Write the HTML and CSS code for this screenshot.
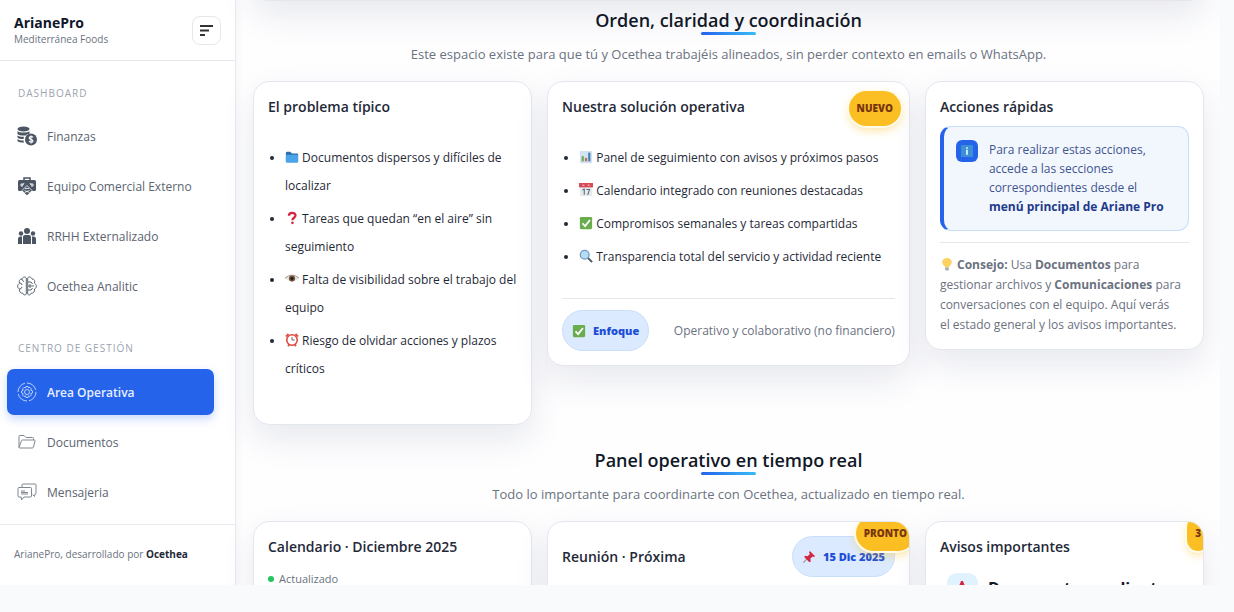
FILE: index.html
```html
<!DOCTYPE html>
<html lang="es">
<head>
    <meta charset="UTF-8">
    <meta name="viewport" content="width=device-width, initial-scale=1.0">
    <title>ArianePro - Area Operativa</title>
    <link rel="stylesheet" href="styles.css">
</head>
<body>
    <!-- Iconos compartidos -->
    <svg class="sprite" aria-hidden="true">
        <symbol id="i-check" viewBox="0 0 16 16">
            <rect x="1" y="1" width="14" height="14" rx="1.5" fill="#6aad4f"/>
            <path d="M4 8.5l3 3 5.5-7" fill="none" stroke="#fff" stroke-width="2"/>
        </symbol>
        <symbol id="i-pin" viewBox="0 0 16 16">
            <path d="M5.5 10.500L1.500 14.500" stroke="#8a97a3" stroke-width="1.200"/>
            <path d="M9 1l6 6-1.500 1-1.500-.5-2.500 2.500.5 3-1.500 1L2.500 8l1-1.500 3 .5L9 4.500 8 2.500z" fill="#d3263f"/>
        </symbol>
    </svg>

    <div class="app">
        <aside class="sidebar">
            <header class="sidebar-header">
                <div>
                    <div class="brand">ArianePro</div>
                    <div class="company">Mediterránea Foods</div>
                </div>
                <button class="menu-btn" type="button" aria-label="Menú">
                    <svg width="15" height="13" viewBox="0 0 15 13" fill="none" stroke="#333" stroke-width="2"><path d="M1 2h13M1 6.500h9M1 11h5"/></svg>
                </button>
            </header>

            <nav class="menu">
                <h4 class="menu-title">DASHBOARD</h4>
                <a class="menu-item" href="#">
                    <svg class="menu-icon" viewBox="0 0 20 20" fill="#4b5563">
                        <ellipse cx="6.500" cy="3" rx="6" ry="2.500"/>
                        <path d="M.5 5c1 2 11 2 12 0v2.500c-1 .5-3 1-4 2-3 .3-7-.2-8-1.500zM.5 9.500c1 1 4 1.500 6.500 1.300L6.500 13C4 13 1 12.500.5 11.500zM.5 13c1 1 3.500 1.500 6 1.500l.5 2c-3 0-6-.5-6.500-1.500z"/>
                        <circle cx="14" cy="13.500" r="6"/>
                        <path d="M16 11.500c-.5-1.500-3.800-1.200-3.800.4 0 1.700 3.800 1.200 3.800 3 0 1.700-3.500 1.700-4 0M14 9.500v8" fill="none" stroke="#fff" stroke-width="1.200"/>
                    </svg>
                    Finanzas
                </a>
                <a class="menu-item" href="#">
                    <svg class="menu-icon" viewBox="0 0 20 20" fill="#4b5563">
                        <path d="M7 4V2h6v2" fill="none" stroke="#4b5563" stroke-width="1.500"/>
                        <rect x="1" y="4" width="18" height="11" rx="1.500"/>
                        <path d="M3 9h3l1-2M17 9h-3l-1-2M5 7v4M15 7v4" fill="none" stroke="#fff" stroke-width=".9"/>
                        <path d="M5 14.500l5-5 5 5-3 3.500-2 1.500L8 18z" stroke="#fff" stroke-width=".8"/>
                        <path d="M7.500 14.500l5 2M12.500 14.500l-5 2M8 12.500h4" stroke="#fff" stroke-width=".8"/>
                    </svg>
                    Equipo Comercial Externo
                </a>
                <a class="menu-item" href="#">
                    <svg class="menu-icon" viewBox="0 0 20 20" fill="#4b5563">
                        <circle cx="10" cy="5" r="3"/><circle cx="4" cy="7.500" r="2.200"/><circle cx="16" cy="7.500" r="2.200"/>
                        <path d="M6 18v-7q0-2 2-2h4q2 0 2 2v7zM1 18v-5q0-2.500 2.500-2.500H5V18zM15 18v-7.500h1.500Q19 10.500 19 13v5z"/>
                    </svg>
                    RRHH Externalizado
                </a>
                <a class="menu-item" href="#">
                    <svg class="menu-icon" viewBox="0 0 20 20" fill="none" stroke="#5b6470" stroke-width="1">
                        <path d="M9.300 2C8 .3 5.500 1 5 3 2.500 3 1.500 5.500 2.700 7 0 8.500 0 12 2.500 13 2 16 4 17.500 5.500 17c1 2.500 3.500 2.200 3.800 1zM10.700 2C12 .3 14.500 1 15 3c2.500 0 3.500 2.500 2.300 4 2.700 1.500 2.700 5 .2 6 .5 3-1.500 4.500-3 4-1 2.500-3.500 2.200-3.800 1z"/>
                        <path d="M5 3q0 2 2 2.500M2.700 7Q5 7 5 9M2.500 13q2 0 2.500-2M11 6h3l1.500 2M11 10h6M11 14h3l1.500-2M13 8v4"/>
                    </svg>
                    Ocethea Analitic
                </a>

                <h4 class="menu-title">CENTRO DE GESTIÓN</h4>
                <a class="menu-item active" href="#">
                    <svg class="menu-icon" viewBox="0 0 20 20" fill="none" stroke="#c7dafc" stroke-width=".9">
                        <circle cx="10" cy="10" r="9" stroke-dasharray="12 2"/>
                        <circle cx="10" cy="10" r="2.500"/>
                        <path d="M9 4.500h2l.4 1.500 1.500-.7 1.500 1.500-.7 1.400 1.800.7v2l-1.800.6.7 1.500-1.500 1.500-1.400-.7-.5 1.700H9l-.5-1.700-1.500.7L5.500 13l.7-1.500-1.700-.6V9l1.700-.7-.7-1.500L7 5.300l1.500.7z"/>
                    </svg>
                    Area Operativa
                </a>
                <a class="menu-item" href="#">
                    <svg class="menu-icon" viewBox="0 0 20 20" fill="none" stroke="#808791" stroke-width="1">
                        <path d="M2 15.500V4.500q0-1 1-1h4l2 2h6.500q1 0 1 1V8M2 15.500L4.500 8.500Q4.800 8 5.500 8h11.700q1 0 .8 1l-1.500 6q-.3 1-1.200 1H2.800Q2 16 2 15.500z"/>
                    </svg>
                    Documentos
                </a>
                <a class="menu-item" href="#">
                    <svg class="menu-icon" viewBox="0 0 20 20" fill="none" stroke="#808791" stroke-width="1">
                        <path d="M5 5V3q0-1 1-1h12q1 0 1 1v8q0 1-1 1l-.5 2.500-2-2"/>
                        <path d="M2 5.500h11.500q1 0 1 1V14q0 1-1 1H7l-2.500 3-.3-3H2q-1 0-1-1V6.500q0-1 1-1z"/>
                        <path d="M4 9h4M4 10.500h7M4 12h7" />
                    </svg>
                    Mensajeria
                </a>
            </nav>

            <footer class="sidebar-footer">ArianePro, desarrollado por <strong>Ocethea</strong></footer>
        </aside>

        <main class="content">
            <div class="hero-end"></div>

            <section>
                <div class="section-head">
                    <h2>Orden, claridad y coordinación</h2>
                    <p>Este espacio existe para que tú y Ocethea trabajéis alineados, sin perder contexto en emails o WhatsApp.</p>
                </div>
                <div class="cards">
                    <article class="card">
                        <div class="card-head"><h3>El problema típico</h3></div>
                        <ul class="list">
                            <li>
                                <svg class="emoji" viewBox="0 0 16 16"><path d="M1 3.500q0-1.500 1.500-1.500H6l2 2h6q1 0 1 1v8H1z" fill="#2a6fa8"/><rect x="1" y="5.500" width="14" height="9" rx="1.200" fill="#4ba3ea"/></svg>
                                Documentos dispersos y difíciles de localizar
                            </li>
                            <li>
                                <svg class="emoji" viewBox="0 0 16 16"><path d="M4.500 5.500C4.500 1 12 1 12 5.200c0 2.500-3.500 2.500-3.500 5.300" fill="none" stroke="#d3263f" stroke-width="2.600"/><circle cx="8.500" cy="13.500" r="1.500" fill="#d3263f"/></svg>
                                Tareas que quedan “en el aire” sin seguimiento
                            </li>
                            <li>
                                <svg class="emoji" viewBox="0 0 16 16"><path d="M0 7.500q8-7 16 0-8 6-16 0z" fill="#e8e2dd"/><path d="M0 7q8-7 16 0" fill="none" stroke="#9a8a80"/><circle cx="8" cy="7.500" r="3.500" fill="#70503c"/><circle cx="8" cy="7.500" r="1.600" fill="#1e1815"/></svg>
                                Falta de visibilidad sobre el trabajo del equipo
                            </li>
                            <li>
                                <svg class="emoji" viewBox="0 0 16 16"><path d="M1 4l3-3M15 4l-3-3M3.500 15l1.500-2M12.500 15L11 13" stroke="#e2483d" stroke-width="2"/><circle cx="8" cy="8" r="6" fill="#fff" stroke="#e2483d" stroke-width="1.800"/><path d="M8 4.500V8h3" fill="none" stroke="#555"/></svg>
                                Riesgo de olvidar acciones y plazos críticos
                            </li>
                        </ul>
                    </article>

                    <article class="card">
                        <span class="badge">NUEVO</span>
                        <div class="card-head"><h3>Nuestra solución operativa</h3></div>
                        <ul class="list">
                            <li>
                                <svg class="emoji" viewBox="0 0 16 16"><rect x="1" y="1" width="14" height="14" rx="1" fill="#d3e3f1"/><path d="M3 7h2.500v6H3z" fill="#6aad4f"/><path d="M6.800 9h2.500v4H6.800z" fill="#c26a5c"/><path d="M10.500 3H13v10h-2.500z" fill="#4a7fb5"/></svg>
                                Panel de seguimiento con avisos y próximos pasos
                            </li>
                            <li>
                                <svg class="emoji" viewBox="0 0 16 16"><rect x="1" y="1" width="14" height="14" fill="#e6eaee"/><path d="M0 0h16v5H0z" fill="#d94a56"/><path d="M4 2.500h2M10 2.500h2" stroke="#fff"/><path d="M4 8l2-1v6.500M8.500 7.500H12l-2 6" fill="none" stroke="#596673" stroke-width="1.200"/></svg>
                                Calendario integrado con reuniones destacadas
                            </li>
                            <li>
                                <svg class="emoji"><use href="#i-check"/></svg>
                                Compromisos semanales y tareas compartidas
                            </li>
                            <li>
                                <svg class="emoji" viewBox="0 0 16 16"><path d="M10 10l5 5" stroke="#4c5963" stroke-width="2.200"/><circle cx="6.500" cy="6.500" r="5" fill="#b8dcf5" stroke="#6d9bc4" stroke-width="1.500"/></svg>
                                Transparencia total del servicio y actividad reciente
                            </li>
                        </ul>
                        <hr>
                        <div class="card-foot">
                            <span class="pill"><svg class="emoji"><use href="#i-check"/></svg>Enfoque</span>
                            <span class="muted">Operativo y colaborativo (no financiero)</span>
                        </div>
                    </article>

                    <article class="card">
                        <div class="card-head"><h3>Acciones rápidas</h3></div>
                        <div class="info">
                            <span class="info-icon">
                                <svg width="12" height="12" viewBox="0 0 14 14"><rect width="14" height="14" rx="1" fill="#3b8fd6"/><path d="M7 2.500v2M7 5.500v6" stroke="#fff" stroke-width="1.800"/></svg>
                            </span>
                            <p>Para realizar estas acciones, accede a las secciones correspondientes desde el <strong>menú principal de Ariane Pro</strong></p>
                        </div>
                        <hr>
                        <p class="tip">
                            <svg class="emoji" viewBox="0 0 16 16"><path d="M5.500 10.500C0 6.500 3 1 8 1s8 5.500 2.500 9.500V12h-5z" fill="#fbd160"/><path d="M5.800 12h4.400v2.500l-1 1H6.800l-1-1z" fill="#a5b2b5"/></svg>
                            <strong>Consejo:</strong> Usa <strong>Documentos</strong> para gestionar archivos y <strong>Comunicaciones</strong> para conversaciones con el equipo. Aquí verás<br>el estado general y los avisos importantes.
                        </p>
                    </article>
                </div>
            </section>

            <section>
                <div class="section-head">
                    <h2>Panel operativo en tiempo real</h2>
                    <p>Todo lo importante para coordinarte con Ocethea, actualizado en tiempo real.</p>
                </div>
                <div class="cards">
                    <article class="card clipped">
                        <div class="card-head"><h3>Calendario · Diciembre 2025</h3></div>
                        <div class="status"><span class="dot"></span>Actualizado</div>
                    </article>
                    <article class="card clipped">
                        <span class="badge corner">PRONTO</span>
                        <div class="card-head">
                            <h3>Reunión · Próxima</h3>
                            <span class="pill"><svg class="emoji"><use href="#i-pin"/></svg>15 Dic 2025</span>
                        </div>
                    </article>
                    <article class="card clipped">
                        <span class="badge corner">3</span>
                        <div class="card-head"><h3>Avisos importantes</h3></div>
                        <div class="notice">
                            <span class="notice-icon"><svg class="emoji" viewBox="0 0 16 16"><path d="M7 0h2l6 14H1z" fill="#d3263f"/></svg></span>
                            <strong>Documento pendiente</strong>
                        </div>
                    </article>
                </div>
            </section>
        </main>
    </div>
</body>
</html>
```

FILE: styles.css
```css
* {
    box-sizing: border-box;
}

body {
    margin: 0;
    padding: 0 14px 27px 0;
    height: 100vh;
    overflow: hidden;
    background-color: #f8fafc;
    font-family: "Segoe UI", "Open Sans", sans-serif;
    font-size: 12px;
    color: #1f2937;
}

h2, h3, h4, p, ul {
    margin: 0;
}

.sprite {
    display: none;
}

.app {
    display: flex;
    height: 100%;
    overflow: hidden;
    background-color: #fefeff;
}

/* Barra lateral */
.sidebar {
    display: flex;
    flex-direction: column;
    flex: 0 0 236px;
    background-color: #fff;
    border-right: 1px solid #e8eaef;
    box-shadow: 2px 0 8px rgba(15, 23, 42, 0.04);
}

.sidebar-header {
    display: flex;
    justify-content: space-between;
    align-items: center;
    height: 61px;
    padding: 0 14px;
    border-bottom: 1px solid #e5e7eb;
}

.brand {
    font-size: 14px;
    font-weight: 700;
    line-height: 18px;
    color: #0f172a;
}

.company {
    font-size: 10px;
    line-height: 14px;
    color: #6b7280;
}

.menu-btn {
    display: flex;
    align-items: center;
    justify-content: center;
    width: 29px;
    height: 29px;
    padding: 0;
    background-color: #fff;
    border: 1px solid #e5e7eb;
    border-radius: 8px;
    cursor: pointer;
}

.menu {
    display: flex;
    flex-direction: column;
    gap: 4px;
    flex: 1;
    padding: 0 21px 0 7px;
}

.menu-title {
    height: 48px;
    padding: 24px 11px 0;
    font-size: 10px;
    font-weight: 400;
    line-height: 16px;
    letter-spacing: 1px;
    color: #9ca3af;
}

.menu-item + .menu-title {
    height: 52px;
    padding-top: 27px;
}

.menu-item {
    display: flex;
    align-items: center;
    gap: 10px;
    height: 46px;
    padding: 0 10px;
    border-radius: 7px;
    color: #5b6470;
    text-decoration: none;
}

.menu-item.active {
    background-color: #2563eb;
    color: #e8f0ff;
    font-weight: 600;
    box-shadow: 0 4px 10px rgba(37, 99, 235, 0.25);
}

.menu-icon {
    width: 20px;
    height: 20px;
}

.sidebar-footer {
    height: 61px;
    padding: 20px 14px;
    border-top: 1px solid #e9ebef;
    font-size: 10px;
    line-height: 18px;
    color: #6b7280;
}

.sidebar-footer strong {
    color: #1f2937;
}

/* Contenido */
.content {
    flex: 1;
    min-width: 0;
    padding: 0 16px 0 17px;
}

/* Borde inferior del hero, el resto queda por encima del scroll */
.hero-end {
    height: 80px;
    margin-top: -79px;
    background-color: #fff;
    border-bottom: 1px solid #e5e7eb;
    border-radius: 16px;
    box-shadow: 0 14px 34px rgba(30, 41, 90, 0.1);
}

.section-head {
    padding: 5px 0 17px;
    text-align: center;
}

section + section .section-head {
    padding-top: 21px;
}

.section-head h2 {
    position: relative;
    font-size: 18px;
    font-weight: 600;
    line-height: 28px;
    color: #111827;
}

.section-head h2::after {
    content: "";
    position: absolute;
    left: 50%;
    bottom: -1px;
    width: 55px;
    height: 3px;
    margin-left: -28px;
    border-radius: 2px;
    background: linear-gradient(90deg, #2563eb, #38bdf8);
}

.section-head p {
    margin-top: 10px;
    font-size: 13px;
    line-height: 20px;
    color: #6b7280;
}

.cards {
    display: grid;
    grid-template-columns: 1fr 1.3fr 1fr;
    align-items: start;
    gap: 15px;
}

.card {
    position: relative;
    min-width: 0;
    padding: 14px;
    background-color: #fff;
    border: 1px solid #e5e7ee;
    border-radius: 16px;
    box-shadow: 0 14px 34px rgba(30, 41, 90, 0.1);
}

.card.clipped {
    min-height: 200px;
    overflow: hidden;
}

.card-head {
    display: flex;
    justify-content: space-between;
    align-items: center;
    margin-bottom: 8px;
}

.card-head h3 {
    font-size: 14px;
    font-weight: 600;
    line-height: 22px;
}

.list {
    margin: 26px 0 27px;
    padding-left: 17px;
    line-height: 28px;
}

.list li {
    margin-bottom: 5px;
}

.emoji {
    width: 14px;
    height: 14px;
    vertical-align: -2px;
}

.card hr {
    margin: 11px 0;
    border: 0;
    border-top: 1px solid #e5e7eb;
}

.card-foot {
    display: flex;
    justify-content: space-between;
    align-items: center;
}

.muted {
    color: #6b7280;
}

.pill {
    display: inline-flex;
    align-items: center;
    gap: 7px;
    height: 41px;
    padding: 0 9px;
    background-color: #dbeafe;
    border: 1px solid #c9defb;
    border-radius: 21px;
    font-size: 11px;
    font-weight: 800;
    color: #1d4ed8;
}

.badge {
    position: absolute;
    top: 9px;
    right: 8px;
    padding: 0 8px;
    border-radius: 18px;
    background-color: #fbbf24;
    box-shadow: 0 0 0 2px #fffaea, 0 4px 10px rgba(251, 191, 36, 0.45);
    font-size: 10px;
    font-weight: 800;
    line-height: 35px;
    color: #78350f;
}

.badge.corner {
    top: -6px;
    right: -6px;
}

.info {
    display: flex;
    align-items: flex-start;
    gap: 11px;
    padding: 13px 20px 14px 12px;
    background-color: #f2f7fe;
    border: 1px solid #c9defb;
    border-left: 4px solid #2563eb;
    border-radius: 11px;
}

.info-icon {
    display: flex;
    align-items: center;
    justify-content: center;
    flex: 0 0 22px;
    height: 22px;
    border-radius: 6px;
    background-color: #2563eb;
}

.info p {
    line-height: 19px;
    color: #3f548f;
}

.info strong {
    color: #1e3a8a;
}

.tip {
    padding-top: 1px;
    line-height: 20px;
    color: #6b7280;
}

.status {
    display: flex;
    align-items: center;
    gap: 5px;
    margin-top: 13px;
    font-size: 11px;
    line-height: 16px;
    color: #6b7280;
}

.dot {
    width: 6px;
    height: 6px;
    border-radius: 50%;
    background-color: #22c55e;
}

.notice {
    display: flex;
    align-items: center;
    gap: 10px;
    margin-top: 14px;
    padding-left: 7px;
    font-size: 16px;
    line-height: 32px;
    white-space: nowrap;
    color: #111827;
}

.notice-icon {
    display: flex;
    align-items: center;
    justify-content: center;
    width: 31px;
    height: 31px;
    border-radius: 10px;
    background-color: #e0f2fe;
}
```
